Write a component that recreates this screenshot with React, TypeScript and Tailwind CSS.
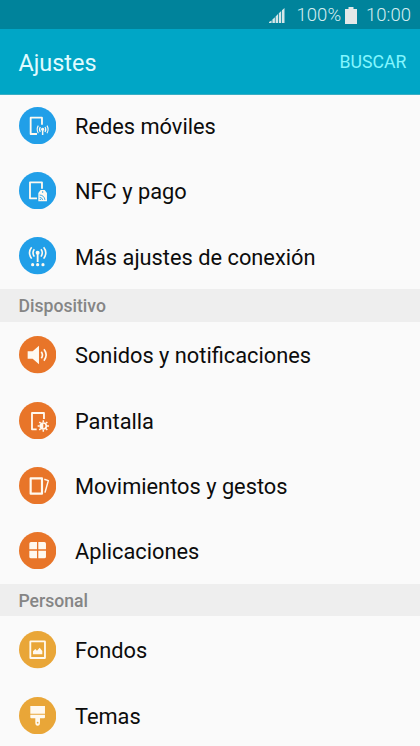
import type { ReactNode } from "react";

type Item = { label: string; icon: ReactNode };

const outline = { fill: "none", stroke: "currentColor", strokeWidth: 5.5, strokeLinejoin: "round" as const };

const mobileNetworks = (
  <>
    <path d="M54 81H35V32H69V53" {...outline} />
    <circle cx="71" cy="67" r="4.5" fill="currentColor" />
    <path d="M71 67V84" {...outline} strokeWidth={4.5} />
    <path d="M64 60Q59 67 64 75M78 60Q83 67 78 75M58 56Q51 67 58 79M84 56Q91 67 84 79" {...outline} strokeWidth={3.4} />
  </>
);

const nfc = (
  <>
    <path d="M54 79H33V31H69V50" {...outline} />
    <path d="M58 63L65 54H77L84 63V88H58Z" fill="currentColor" />
    <circle cx="71" cy="60" r="2.2" fill="#219fe8" />
    <path d="M62 69Q76 70 78 84M62 76Q70 77 71 84" fill="none" stroke="#219fe8" strokeWidth="2.6" />
    <circle cx="64" cy="82" r="2" fill="#219fe8" />
  </>
);

const moreConnections = (
  <>
    <circle cx="56" cy="47" r="6" fill="currentColor" />
    <path d="M56 47V75" {...outline} strokeWidth={5.5} />
    <path d="M46 37Q38 47 46 59M66 37Q74 47 66 59M38 31Q25 47 38 65M74 31Q87 47 74 65" {...outline} strokeWidth={4.8} />
    <circle cx="41" cy="83" r="4.8" fill="currentColor" />
    <circle cx="56" cy="83" r="4.8" fill="currentColor" />
    <circle cx="72" cy="83" r="4.8" fill="currentColor" />
  </>
);

const sound = (
  <>
    <path d="M26 46H41L60 29V85L41 68H26Z" fill="currentColor" />
    <path d="M67 47Q74 57 67 67M75 40Q88 57 75 74" {...outline} strokeWidth={5} />
  </>
);

const display = (
  <>
    <path d="M53 82H39V33H75V51" {...outline} />
    <circle cx="73" cy="72" r="9" {...outline} strokeWidth={5} />
    <path d="M73 63A9 9 0 0 0 73 81Z" fill="currentColor" />
    <path d="M73 55V61M73 83V89M56 72H62M84 72H90M61 60L65 64M81 80L85 84M61 84L65 80M81 64L85 60" {...outline} strokeWidth={4.5} />
  </>
);

const motions = (
  <>
    <rect x="35" y="34" width="34" height="46" {...outline} strokeWidth={6.5} />
    <path d="M76 37L88 41L78 77" {...outline} strokeWidth={4.5} />
  </>
);

const apps = (
  <g fill="currentColor">
    <path d="M36 30H54V52H31V35Q31 30 36 30Z" />
    <path d="M58 30H76Q81 30 81 35V52H58Z" />
    <path d="M31 56H54V79H36Q31 79 31 74Z" />
    <path d="M58 56H81V74Q81 79 76 79H58Z" />
  </g>
);

const wallpaper = (
  <>
    <rect x="34" y="31" width="44" height="50" rx="1" {...outline} />
    <path d="M42 70V61L49 54L54 59L62 50L70 60V70Z" fill="currentColor" />
  </>
);

const themes = (
  <>
    <path d="M34 27H78V50H34ZM34 53H78V61Q78 64 75 64H63V77Q63 86 56 86Q49 86 49 77V64H37Q34 64 34 61Z" fill="currentColor" />
    <circle cx="56" cy="77" r="2.6" fill="#e9a638" />
  </>
);

const connection: Item[] = [
  { label: "Redes móviles", icon: mobileNetworks },
  { label: "NFC y pago", icon: nfc },
  { label: "Más ajustes de conexión", icon: moreConnections },
];
const device: Item[] = [
  { label: "Sonidos y notificaciones", icon: sound },
  { label: "Pantalla", icon: display },
  { label: "Movimientos y gestos", icon: motions },
  { label: "Aplicaciones", icon: apps },
];
const personal: Item[] = [
  { label: "Fondos", icon: wallpaper },
  { label: "Temas", icon: themes },
];

function Rows({ items, color }: { items: Item[]; color: string }) {
  return (
    <ul>
      {items.map(({ label, icon }) => (
        <li key={label} className="flex h-[65.3px] items-center pt-[1.5px] pl-[18.7px]">
          <svg viewBox="0 0 112 112" className={`size-[37.3px] shrink-0 ${color}`}>
            <circle cx="56" cy="56" r="56" />
            <g className="text-[#fff9ef]">{icon}</g>
          </svg>
          <span className="pt-[3px] pl-[19px] text-[21.8px] leading-7 whitespace-nowrap text-[#0c0c0c]">{label}</span>
        </li>
      ))}
    </ul>
  );
}

function SectionTitle({ children }: { children: ReactNode }) {
  return (
    <h2 className="flex h-[32.5px] items-center bg-[#eeeeee] pt-[2px] pl-[18.5px] text-[17.6px] font-medium text-[#858585]">
      {children}
    </h2>
  );
}

export default function App() {
  return (
    <div className="flex h-[746px] w-[420px] flex-col overflow-hidden bg-[#fafafa] font-[Roboto,sans-serif]">
      <div className="flex h-[29px] shrink-0 items-center justify-end bg-[#00839b] pt-[2px] pr-[9px] text-[18.5px] font-light text-[#d5edf0]">
        <svg viewBox="0 0 16 16" className="mr-[11.5px] size-4" fill="#d5e6e8">
          <path d="M0 14L2.6 12.5V15H0ZM3.4 11.5L5.9 9.2V15H3.4ZM6.6 8.5L9 6V15H6.6ZM9.8 5.3L12.2 3V15H9.8ZM13 2.3L15.5 0V15H13Z" />
        </svg>
        <span>100%</span>
        <svg viewBox="0 0 12 18" className="mr-[9px] ml-[4px] h-[18px] w-3" fill="#e4e8e8">
          <path d="M3.5 0H8.5V2H12V17H0V2H3.5Z" />
        </svg>
        <span>10:00</span>
      </div>
      <header className="flex h-[65.5px] shrink-0 items-center justify-between border-b border-[#3aaec4] bg-[#00a6c6] pt-[4px] pr-[13.5px] pl-[18.5px]">
        <h1 className="pt-px text-[23.4px] text-[#e0fbff]">Ajustes</h1>
        <button className="pb-px text-[17.7px] text-[#83f6ff]">BUSCAR</button>
      </header>
      <main className="min-h-0 flex-1 overflow-hidden">
        <div className="-mt-[2.4px] pb-[1px]">
          <Rows items={connection} color="fill-[#219fe8]" />
        </div>
        <SectionTitle>Dispositivo</SectionTitle>
        <div className="pb-[1.3px]">
          <Rows items={device} color="fill-[#e87529]" />
        </div>
        <SectionTitle>Personal</SectionTitle>
        <Rows items={personal} color="fill-[#e9a638]" />
      </main>
    </div>
  );
}
